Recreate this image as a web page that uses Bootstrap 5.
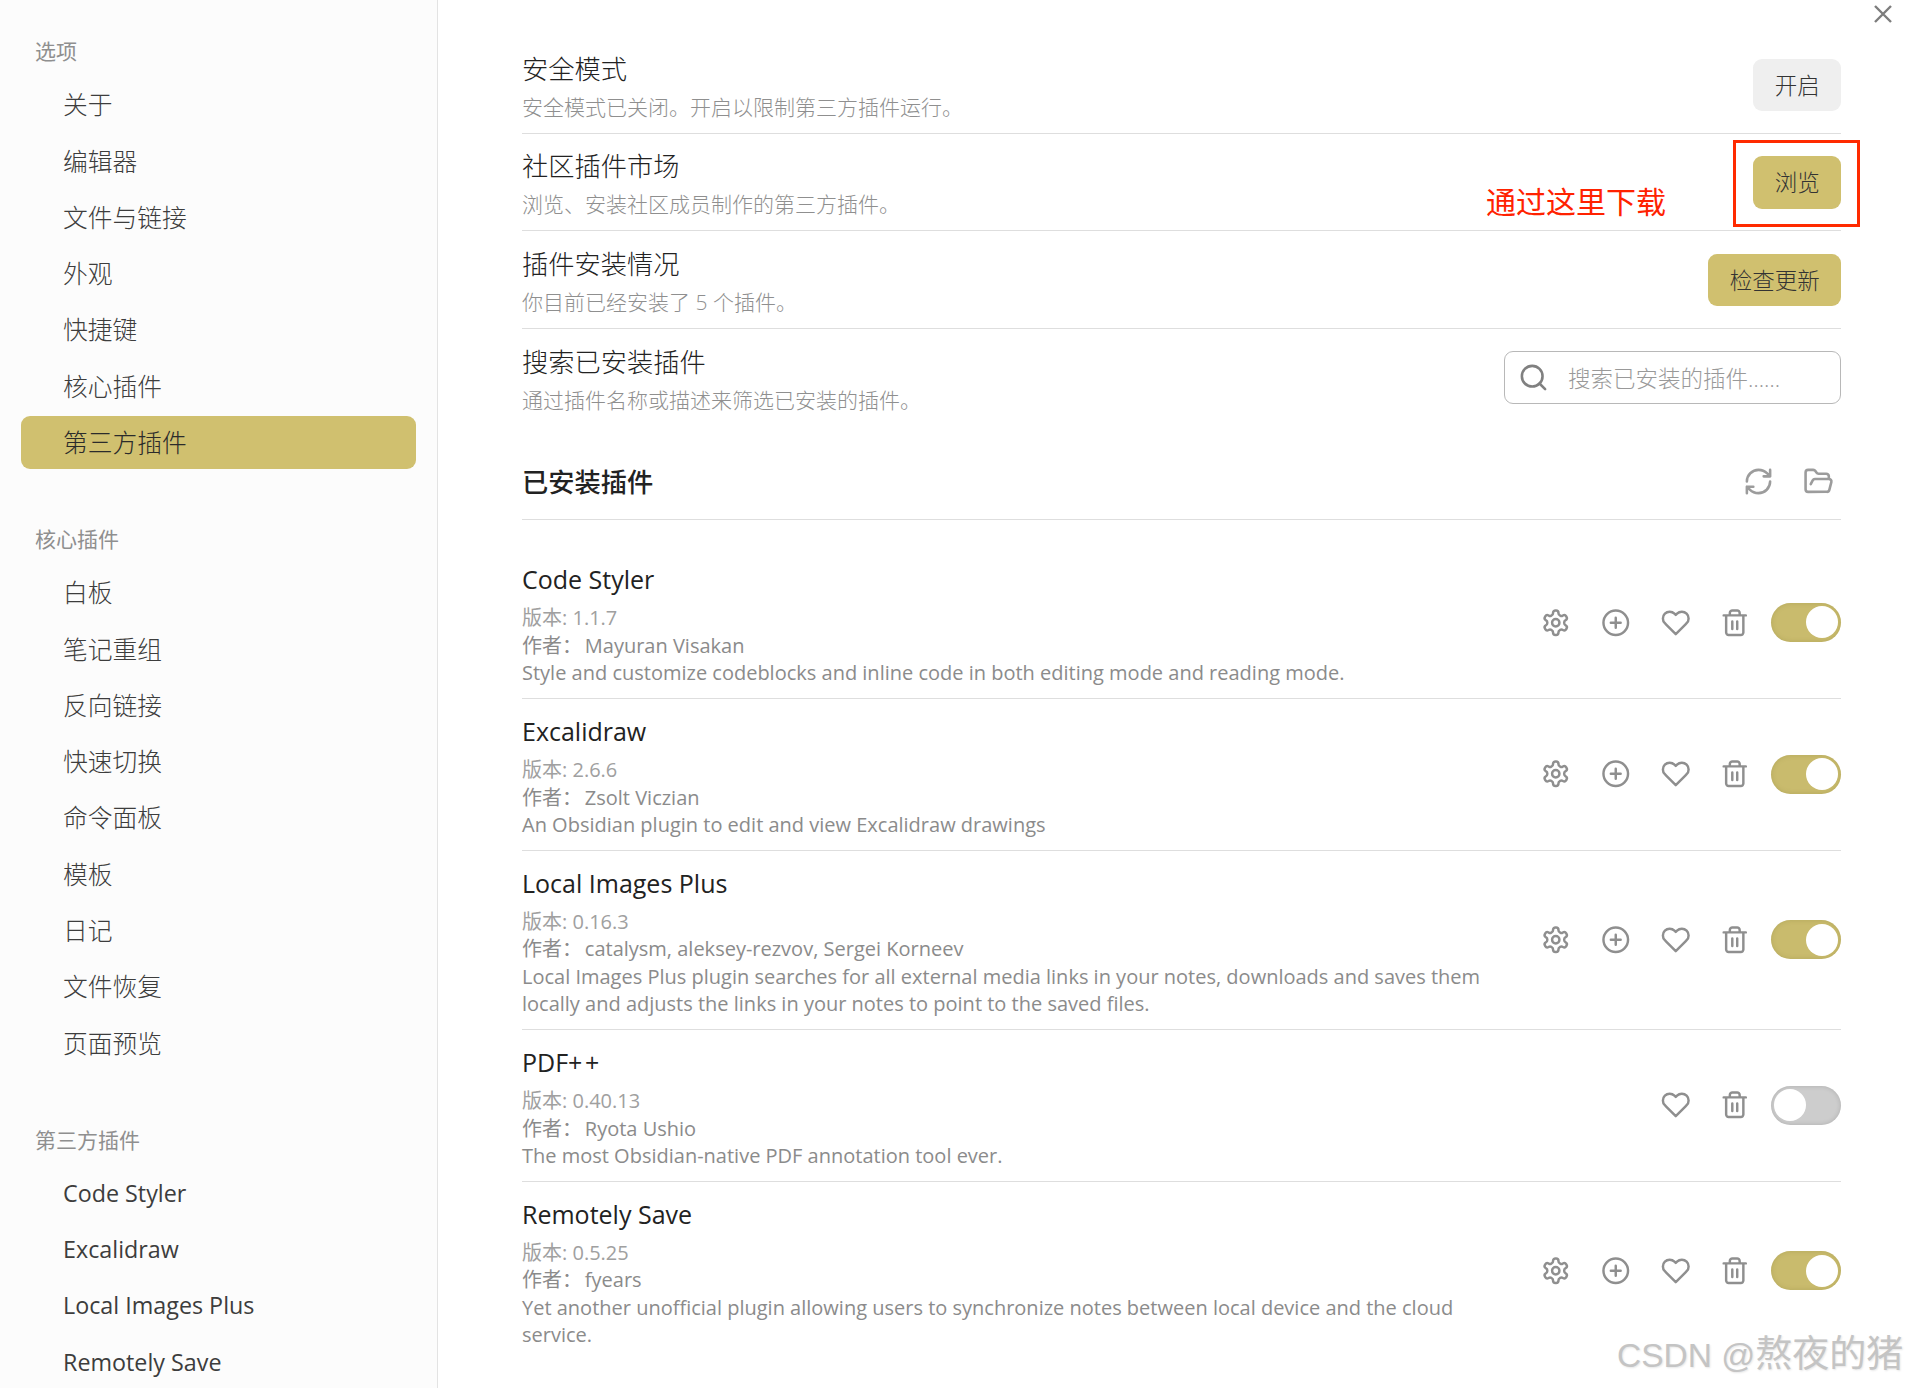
<!DOCTYPE html>
<html lang="zh-CN">
<head>
    <meta charset="UTF-8">
    <meta name="viewport" content="width=device-width, initial-scale=1.0">
    <title>第三方插件</title>
    <link href="https://cdn.jsdelivr.net/npm/bootstrap@5.3.0/dist/css/bootstrap.min.css" rel="stylesheet">
    <style>
        html, body { height: 100%; }
        body {
            font-family: "Open Sans", "Noto Sans CJK SC", sans-serif;
            font-size: 24px;
            color: #222;
            background: #fff;
            overflow: hidden;
            position: relative;
        }
        .side-pane {
            width: 438px;
            flex: none;
            padding: 35px 21px 0;
            background: #fcfcfc;
            border-right: 1px solid #e3e3e3;
        }
        .side-group { gap: 2.9px; margin-bottom: 53.6px; }
        .side-title {
            font-size: 21px;
            line-height: 32px;
            font-weight: 400;
            color: #8f8f8f;
            padding-left: 14px;
            margin-bottom: 11.3px;
        }
        .side-link {
            height: 53.4px;
            line-height: 53.4px;
            padding: 0 0 0 42px;
            font-size: 24.75px;
            font-weight: 300;
            color: #3d3d3d;
            border-radius: 9px;
        }
        .side-link.latin-link { font-size: 23.3px; font-weight: 400; }
        .side-link.active { background: #d0c06f; color: #2b2b2b; }
        .main-pane { padding: 36px 69px 0 84px; min-width: 0; }
        .set-row { border-bottom: 1px solid #dedede; min-height: 97.5px; }
        .set-row.no-line { border-bottom: 0; }
        .set-info { padding: 16.5px 0 11px; min-width: 0; }
        .set-name { font-size: 26.25px; line-height: 32px; font-weight: 300; color: #222; }
        .set-desc { font-size: 21px; line-height: 29px; margin-top: 8px; font-weight: 300; color: #8f8f8f; }
        .gold-btn, .grey-btn {
            height: 52.5px;
            margin-top: 1px;
            padding: 2px 21.25px 0;
            font-size: 22.5px;
            line-height: 50.5px;
            font-weight: 300;
            border: 0;
            border-radius: 9px;
            color: #333;
        }
        .gold-btn { background: #d0c06f; }
        .grey-btn { background: #efefef; }
        .search-wrap { width: 337px; height: 52.5px; }
        .search-wrap svg { position: absolute; left: 13.5px; top: 10.5px; width: 31px; height: 31px; color: #808080; }
        .search-input {
            height: 52.5px;
            padding: 2px 20px 0 63px;
            font-size: 22.5px;
            font-weight: 300;
            border: 1.5px solid #b8b8b8;
            border-radius: 9px;
            background: #fff;
        }
        .search-input::placeholder { color: #999; opacity: 1; }
        .list-head { margin-top: 18.5px; height: 75px; border-bottom: 1px solid #dedede; }
        .list-head-text { font-size: 26.25px; font-weight: 500; color: #222; margin: 2px 0 0; }
        .plugin-list { margin-top: 27.5px; }
        .plugin-row { border-bottom: 1px solid #dedede; }
        .plugin-row.no-line { border-bottom: 0; }
        .plugin-info { padding: 17px 0 11px; width: 988px; flex: none; }
        .plugin-name { font-size: 25px; line-height: 30px; color: #222; margin-bottom: 10.25px; }
        .plus-wide { letter-spacing: 2.5px; }
        .plugin-meta { font-size: 20px; line-height: 27.5px; color: #8b8b8b; }
        .plugin-ver { color: #a0a0a0; }
        .by-label { margin-right: -2.4px; }
        .act-gap { gap: 14.7px; }
        .tool-btn {
            width: 45px;
            height: 45px;
            color: #8f8f8f;
            display: flex;
            align-items: center;
            justify-content: center;
            flex: none;
        }
        .tool-btn svg { width: 29.5px; height: 29.5px; }
        .tool-btn svg, .search-wrap svg {
            fill: none;
            stroke: currentColor;
            stroke-width: 2;
            stroke-linecap: round;
            stroke-linejoin: round;
        }
        .head-icon { color: #9c9c9c; }
        .head-icon svg { width: 31px; height: 31px; }
        .switch-pill {
            width: 70px;
            height: 39px;
            margin-left: -1.2px;
            padding: 3.5px 3px;
            border-radius: 20px;
            background: #c9bb6d;
            box-shadow: inset 0 0 5px rgba(120, 110, 40, .25);
            flex: none;
        }
        .switch-pill.off { background: #cdcdcd; box-shadow: inset 0 0 5px rgba(0, 0, 0, .15); justify-content: flex-start !important; }
        .switch-knob { width: 32px; height: 32px; border-radius: 50%; background: #fff; }
        .close-x { position: absolute; right: 18px; top: 5px; width: 18px; height: 18px; stroke: #7d7d7d; stroke-width: 2.4; }
        .red-box { position: absolute; left: 1733px; top: 140px; width: 127px; height: 87px; border: 3px solid #ff2a00; }
        .red-note { position: absolute; left: 1486px; top: 181px; font-size: 30px; line-height: 42px; color: #ff2200; }
        .mark-text {
            position: absolute;
            left: 1617px;
            top: 1332px;
            font-family: "Liberation Sans", "Noto Sans CJK SC", sans-serif;
            font-size: 33.5px;
            line-height: 46px;
            white-space: nowrap;
            color: #c4c4c4;
            text-shadow: 1px 1px 2px #e6e6e6;
        }
        .mark-cjk { font-size: 37px; }
    </style>
</head>
<body>
    <svg class="d-none">
        <symbol id="ic-gear" viewBox="0 0 24 24"><path d="M12.22 2h-.44a2 2 0 0 0-2 2v.18a2 2 0 0 1-1 1.73l-.43.25a2 2 0 0 1-2 0l-.15-.08a2 2 0 0 0-2.73.73l-.22.38a2 2 0 0 0 .73 2.73l.15.1a2 2 0 0 1 1 1.72v.51a2 2 0 0 1-1 1.74l-.15.09a2 2 0 0 0-.73 2.73l.22.38a2 2 0 0 0 2.73.73l.15-.08a2 2 0 0 1 2 0l.43.25a2 2 0 0 1 1 1.73V20a2 2 0 0 0 2 2h.44a2 2 0 0 0 2-2v-.18a2 2 0 0 1 1-1.73l.43-.25a2 2 0 0 1 2 0l.15.08a2 2 0 0 0 2.73-.73l.22-.39a2 2 0 0 0-.73-2.73l-.15-.08a2 2 0 0 1-1-1.74v-.5a2 2 0 0 1 1-1.74l.15-.09a2 2 0 0 0 .73-2.73l-.22-.38a2 2 0 0 0-2.73-.73l-.15.08a2 2 0 0 1-2 0l-.43-.25a2 2 0 0 1-1-1.73V4a2 2 0 0 0-2-2z"/><circle cx="12" cy="12" r="3"/></symbol>
        <symbol id="ic-plus" viewBox="0 0 24 24"><circle cx="12" cy="12" r="10"/><path d="M12 8v8M8 12h8"/></symbol>
        <symbol id="ic-heart" viewBox="0 0 24 24"><path d="M20.84 4.61a5.5 5.5 0 0 0-7.78 0L12 5.67l-1.06-1.06a5.5 5.5 0 0 0-7.78 7.78l1.06 1.06L12 21.23l7.78-7.78 1.06-1.06a5.5 5.5 0 0 0 0-7.78z"/></symbol>
        <symbol id="ic-trash" viewBox="0 0 24 24"><path d="M3 6h18M19 6v14c0 1-1 2-2 2H7c-1 0-2-1-2-2V6M8 6V4c0-1 1-2 2-2h4c1 0 2 1 2 2v2M10 11v6M14 11v6"/></symbol>
        <symbol id="ic-refresh" viewBox="0 0 24 24"><path d="M3 12a9 9 0 0 1 9-9 9.75 9.75 0 0 1 6.74 2.74L21 8M21 3v5h-5M21 12a9 9 0 0 1-9 9 9.75 9.75 0 0 1-6.74-2.74L3 16M8 16H3v5"/></symbol>
        <symbol id="ic-folder" viewBox="0 0 24 24"><path d="m6 14 1.5-2.9A2 2 0 0 1 9.24 10H20a2 2 0 0 1 1.94 2.5l-1.54 6a2 2 0 0 1-1.95 1.5H4a2 2 0 0 1-2-2V5a2 2 0 0 1 2-2h3.9a2 2 0 0 1 1.69.9l.81 1.2a2 2 0 0 0 1.67.9H18a2 2 0 0 1 2 2v2"/></symbol>
    </svg>

    <div class="d-flex h-100">
        <aside class="side-pane">
            <div class="side-title">选项</div>
            <nav class="nav flex-column side-group">
                <a class="nav-link side-link" href="#">关于</a>
                <a class="nav-link side-link" href="#">编辑器</a>
                <a class="nav-link side-link" href="#">文件与链接</a>
                <a class="nav-link side-link" href="#">外观</a>
                <a class="nav-link side-link" href="#">快捷键</a>
                <a class="nav-link side-link" href="#">核心插件</a>
                <a class="nav-link side-link active" href="#">第三方插件</a>
            </nav>
            <div class="side-title">核心插件</div>
            <nav class="nav flex-column side-group">
                <a class="nav-link side-link" href="#">白板</a>
                <a class="nav-link side-link" href="#">笔记重组</a>
                <a class="nav-link side-link" href="#">反向链接</a>
                <a class="nav-link side-link" href="#">快速切换</a>
                <a class="nav-link side-link" href="#">命令面板</a>
                <a class="nav-link side-link" href="#">模板</a>
                <a class="nav-link side-link" href="#">日记</a>
                <a class="nav-link side-link" href="#">文件恢复</a>
                <a class="nav-link side-link" href="#">页面预览</a>
            </nav>
            <div class="side-title">第三方插件</div>
            <nav class="nav flex-column side-group">
                <a class="nav-link side-link latin-link" href="#">Code Styler</a>
                <a class="nav-link side-link latin-link" href="#">Excalidraw</a>
                <a class="nav-link side-link latin-link" href="#">Local Images Plus</a>
                <a class="nav-link side-link latin-link" href="#">Remotely Save</a>
            </nav>
        </aside>

        <main class="main-pane flex-grow-1">
            <div class="set-row d-flex align-items-center justify-content-between">
                <div class="set-info">
                    <div class="set-name">安全模式</div>
                    <div class="set-desc">安全模式已关闭。开启以限制第三方插件运行。</div>
                </div>
                <button type="button" class="btn grey-btn">开启</button>
            </div>
            <div class="set-row d-flex align-items-center justify-content-between">
                <div class="set-info">
                    <div class="set-name">社区插件市场</div>
                    <div class="set-desc">浏览、安装社区成员制作的第三方插件。</div>
                </div>
                <button type="button" class="btn gold-btn">浏览</button>
            </div>
            <div class="set-row d-flex align-items-center justify-content-between">
                <div class="set-info">
                    <div class="set-name">插件安装情况</div>
                    <div class="set-desc">你目前已经安装了 5 个插件。</div>
                </div>
                <button type="button" class="btn gold-btn">检查更新</button>
            </div>
            <div class="set-row no-line d-flex align-items-center justify-content-between">
                <div class="set-info">
                    <div class="set-name">搜索已安装插件</div>
                    <div class="set-desc">通过插件名称或描述来筛选已安装的插件。</div>
                </div>
                <div class="search-wrap position-relative">
                    <svg viewBox="0 0 24 24"><circle cx="11" cy="11" r="8"/><path d="m21 21-4.35-4.35"/></svg>
                    <input type="text" class="form-control search-input" placeholder="搜索已安装的插件……">
                </div>
            </div>

            <div class="list-head d-flex align-items-center justify-content-between">
                <h5 class="list-head-text">已安装插件</h5>
                <div class="d-flex act-gap">
                    <span class="tool-btn head-icon"><svg><use href="#ic-refresh"/></svg></span>
                    <span class="tool-btn head-icon"><svg><use href="#ic-folder"/></svg></span>
                </div>
            </div>

            <div class="plugin-list">
                <div class="plugin-row d-flex align-items-center justify-content-between">
                    <div class="plugin-info">
                        <div class="plugin-name">Code Styler</div>
                        <div class="plugin-meta plugin-ver">版本: 1.1.7</div>
                        <div class="plugin-meta"><span class="by-label">作者：</span> Mayuran Visakan</div>
                        <div class="plugin-meta">Style and customize codeblocks and inline code in both editing mode and reading mode.</div>
                    </div>
                    <div class="d-flex align-items-center act-gap">
                        <span class="tool-btn"><svg><use href="#ic-gear"/></svg></span>
                        <span class="tool-btn"><svg><use href="#ic-plus"/></svg></span>
                        <span class="tool-btn"><svg><use href="#ic-heart"/></svg></span>
                        <span class="tool-btn"><svg><use href="#ic-trash"/></svg></span>
                        <span class="switch-pill d-flex justify-content-end"><span class="switch-knob"></span></span>
                    </div>
                </div>
                <div class="plugin-row d-flex align-items-center justify-content-between">
                    <div class="plugin-info">
                        <div class="plugin-name">Excalidraw</div>
                        <div class="plugin-meta plugin-ver">版本: 2.6.6</div>
                        <div class="plugin-meta"><span class="by-label">作者：</span> Zsolt Viczian</div>
                        <div class="plugin-meta">An Obsidian plugin to edit and view Excalidraw drawings</div>
                    </div>
                    <div class="d-flex align-items-center act-gap">
                        <span class="tool-btn"><svg><use href="#ic-gear"/></svg></span>
                        <span class="tool-btn"><svg><use href="#ic-plus"/></svg></span>
                        <span class="tool-btn"><svg><use href="#ic-heart"/></svg></span>
                        <span class="tool-btn"><svg><use href="#ic-trash"/></svg></span>
                        <span class="switch-pill d-flex justify-content-end"><span class="switch-knob"></span></span>
                    </div>
                </div>
                <div class="plugin-row d-flex align-items-center justify-content-between">
                    <div class="plugin-info">
                        <div class="plugin-name">Local Images Plus</div>
                        <div class="plugin-meta plugin-ver">版本: 0.16.3</div>
                        <div class="plugin-meta"><span class="by-label">作者：</span> catalysm, aleksey-rezvov, Sergei Korneev</div>
                        <div class="plugin-meta">Local Images Plus plugin searches for all external media links in your notes, downloads and saves them locally and adjusts the links in your notes to point to the saved files.</div>
                    </div>
                    <div class="d-flex align-items-center act-gap">
                        <span class="tool-btn"><svg><use href="#ic-gear"/></svg></span>
                        <span class="tool-btn"><svg><use href="#ic-plus"/></svg></span>
                        <span class="tool-btn"><svg><use href="#ic-heart"/></svg></span>
                        <span class="tool-btn"><svg><use href="#ic-trash"/></svg></span>
                        <span class="switch-pill d-flex justify-content-end"><span class="switch-knob"></span></span>
                    </div>
                </div>
                <div class="plugin-row d-flex align-items-center justify-content-between">
                    <div class="plugin-info">
                        <div class="plugin-name">PDF<span class="plus-wide">++</span></div>
                        <div class="plugin-meta plugin-ver">版本: 0.40.13</div>
                        <div class="plugin-meta"><span class="by-label">作者：</span> Ryota Ushio</div>
                        <div class="plugin-meta">The most Obsidian-native PDF annotation tool ever.</div>
                    </div>
                    <div class="d-flex align-items-center act-gap">
                        <span class="tool-btn"><svg><use href="#ic-heart"/></svg></span>
                        <span class="tool-btn"><svg><use href="#ic-trash"/></svg></span>
                        <span class="switch-pill off d-flex justify-content-end"><span class="switch-knob"></span></span>
                    </div>
                </div>
                <div class="plugin-row no-line d-flex align-items-center justify-content-between">
                    <div class="plugin-info">
                        <div class="plugin-name">Remotely Save</div>
                        <div class="plugin-meta plugin-ver">版本: 0.5.25</div>
                        <div class="plugin-meta"><span class="by-label">作者：</span> fyears</div>
                        <div class="plugin-meta">Yet another unofficial plugin allowing users to synchronize notes between local device and the cloud service.</div>
                    </div>
                    <div class="d-flex align-items-center act-gap">
                        <span class="tool-btn"><svg><use href="#ic-gear"/></svg></span>
                        <span class="tool-btn"><svg><use href="#ic-plus"/></svg></span>
                        <span class="tool-btn"><svg><use href="#ic-heart"/></svg></span>
                        <span class="tool-btn"><svg><use href="#ic-trash"/></svg></span>
                        <span class="switch-pill d-flex justify-content-end"><span class="switch-knob"></span></span>
                    </div>
                </div>
            </div>
        </main>
    </div>

    <svg class="close-x" viewBox="0 0 18 18"><path d="M1 1l16 16M17 1L1 17"/></svg>
    <div class="red-box"></div>
    <div class="red-note">通过这里下载</div>
    <div class="mark-text">CSDN @<span class="mark-cjk">熬夜的猪</span></div>

    <script src="https://cdn.jsdelivr.net/npm/bootstrap@5.3.0/dist/js/bootstrap.bundle.min.js"></script>
</body>
</html>
